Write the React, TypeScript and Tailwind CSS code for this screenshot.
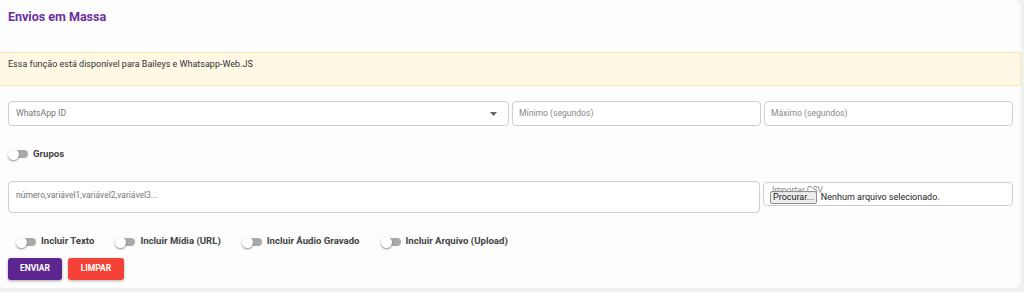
import React from "react";

function Toggle({ label }: { label: string }) {
  return (
    <div className="flex items-center gap-[5px]">
      <div className="relative w-[20px] h-[12px] flex items-center">
        <div className="absolute left-[5px] w-[15px] h-[8px] rounded-full bg-[#a9a9a9]" />
        <div className="absolute left-0 top-[1px] w-[11px] h-[11px] rounded-full bg-white shadow-[0_1px_2px_rgba(0,0,0,0.45)]" />
      </div>
      <span className="text-[9.6px] font-bold text-[#444]">{label}</span>
    </div>
  );
}

export default function App() {
  return (
    <div className="w-[1024px] h-[292px] bg-[#eef2ee] font-['Roboto',sans-serif] overflow-hidden">
      <div className="h-[288px] w-[1021px] bg-[#fdfdfd] rounded-r-[8px] flex flex-col">
        <div className="px-[8px] pt-[8px] h-[52px]">
          <h1 className="text-[12.5px] leading-[18px] font-bold text-[#6a2ea0]">Envios em Massa</h1>
        </div>
        <div className="h-[34px] bg-[#fef8e4] border-y border-r border-[#fbe8b0] px-[8px] pt-[5px]">
          <p className="text-[9px] leading-[12px] text-[#333]">
            Essa função está disponível para Baileys e Whatsapp-Web.JS
          </p>
        </div>
        <div className="px-[8px] pt-[15px] flex gap-[3px]">
          <div className="w-[501px] h-[25px] border border-[#cfcfcf] rounded-[4px] bg-white flex items-center justify-between pl-[7px] pr-[11px]">
            <span className="text-[8.7px] text-[#777]">WhatsApp ID</span>
            <svg width="7" height="4" viewBox="0 0 7 4">
              <path d="M0 0 L7 0 L3.5 4 Z" fill="#666" />
            </svg>
          </div>
          <div className="flex-1 h-[25px] border border-[#cfcfcf] rounded-[4px] bg-white flex items-center pl-[6px]">
            <span className="text-[8.6px] text-[#888]">Mínimo (segundos)</span>
          </div>
          <div className="flex-1 h-[25px] border border-[#cfcfcf] rounded-[4px] bg-white flex items-center pl-[6px]">
            <span className="text-[8.6px] text-[#888]">Máximo (segundos)</span>
          </div>
        </div>
        <div className="px-[8px] mt-[21px]">
          <Toggle label="Grupos" />
        </div>
        <div className="px-[8px] mt-[20px] flex gap-[3px] items-start">
          <div className="w-[752px] h-[32px] border border-[#cfcfcf] rounded-[4px] bg-white pl-[7px] pt-[8px]">
            <span className="block text-[8.5px] leading-[11px] text-[#777]">número,variável1,variável2,variável3...</span>
          </div>
          <div className="relative flex-1 h-[24px] mt-[1px] border border-[#cfcfcf] rounded-[4px] bg-white flex items-start pl-[6px] pt-[8px]">
            <span className="absolute left-[8px] top-[2px] text-[8.5px] leading-[11px] text-[#8a8a8a]">Importar CSV</span>
            <span className="relative text-[9px] leading-[11px] text-[#222] bg-[#e9e9e9]/80 border border-[#8f8f8f] rounded-[2px] px-[2px]">
              Procurar...
            </span>
            <span className="text-[9px] leading-[13px] text-[#222] ml-[4px]">Nenhum arquivo selecionado.</span>
          </div>
        </div>
        <div className="pl-[16px] mt-[21px] flex items-center gap-[21px]">
          <Toggle label="Incluir Texto" />
          <Toggle label="Incluir Mídia (URL)" />
          <Toggle label="Incluir Áudio Gravado" />
          <Toggle label="Incluir Arquivo (Upload)" />
        </div>
        <div className="px-[8px] mt-[9px] flex gap-[6px]">
          <button className="w-[54px] h-[22px] rounded-[3px] bg-[#5d2590] text-white text-[8.5px] font-bold shadow-[0_1px_3px_rgba(0,0,0,0.35)]">
            ENVIAR
          </button>
          <button className="w-[56px] h-[22px] rounded-[3px] bg-[#f44336] text-white text-[8.5px] font-bold shadow-[0_1px_3px_rgba(0,0,0,0.3)]">
            LIMPAR
          </button>
        </div>
      </div>
    </div>
  );
}
